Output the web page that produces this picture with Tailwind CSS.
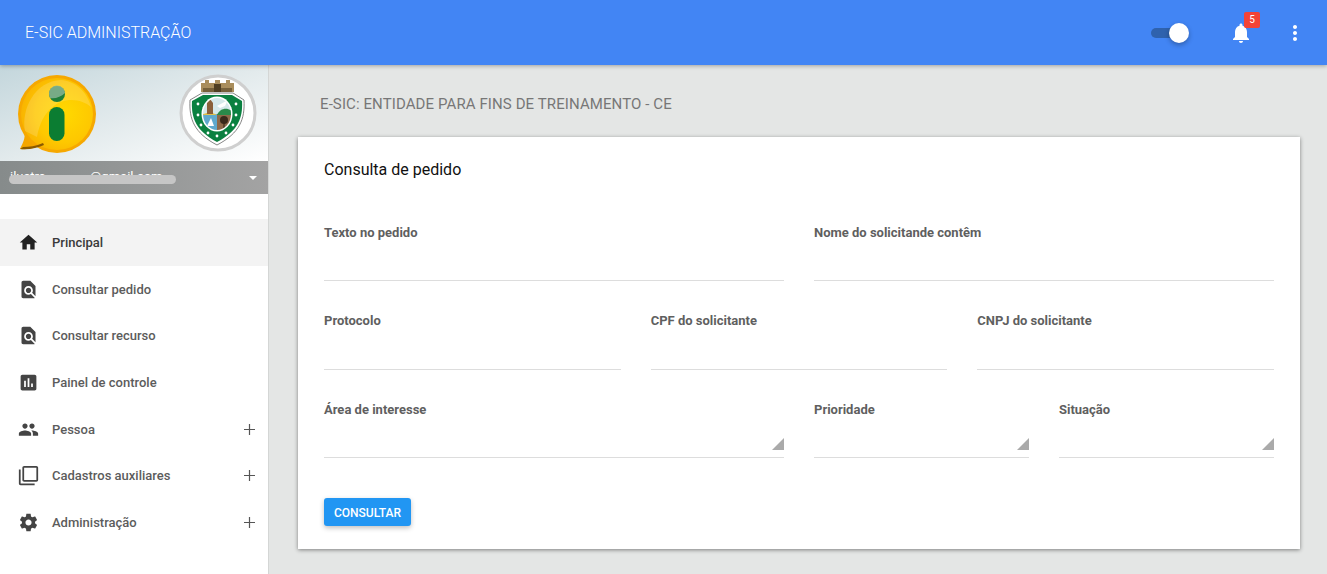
<!DOCTYPE html>
<html lang="pt-BR">
<head>
<meta charset="UTF-8">
<title>E-SIC Administração</title>
<script src="https://cdn.jsdelivr.net/npm/@tailwindcss/browser@4"></script>
</head>
<body class="h-[574px] overflow-hidden bg-[#e4e6e5] font-['Roboto',sans-serif] text-[#5f5f5f]">

<!-- topo -->
<header class="relative z-10 flex h-[65px] items-center justify-between bg-[#4285f4] pl-[25px] pr-[20px] shadow-[0_1px_4px_rgba(0,0,0,0.3)]">
  <div class="text-[16px] font-light text-white">E-SIC ADMINISTRAÇÃO</div>
  <div class="flex items-center">
    <div class="relative mr-[48px] h-[10px] w-[30px] rounded-full bg-[#2f62ad]">
      <div class="absolute right-[-8px] top-[-5px] h-[20px] w-[20px] rounded-full bg-white shadow-[0_2px_5px_rgba(0,0,0,0.3)]"></div>
    </div>
    <div class="relative mr-[30px]">
      <svg class="block h-[24px] w-[24px] fill-white" viewBox="0 0 24 24"><path d="M12 22c1.1 0 2-.9 2-2h-4c0 1.1.89 2 2 2zm6-6v-5c0-3.07-1.64-5.64-4.5-6.32V4c0-.83-.67-1.5-1.5-1.5s-1.5.67-1.5 1.5v.68C7.63 5.36 6 7.92 6 11v5l-2 2v1h16v-1l-2-2z"/></svg>
      <span class="absolute left-[15px] top-[-9px] flex h-[16px] w-[16px] items-center justify-center rounded-[2px] bg-[#f44336] text-[10px] text-white">5</span>
    </div>
    <svg class="block h-[24px] w-[24px] fill-white" viewBox="0 0 24 24"><path d="M12 8c1.1 0 2-.9 2-2s-.9-2-2-2-2 .9-2 2 .9 2 2 2zm0 2c-1.1 0-2 .9-2 2s.9 2 2 2 2-.9 2-2-.9-2-2-2zm0 6c-1.1 0-2 .9-2 2s.9 2 2 2 2-.9 2-2-.9-2-2-2z"/></svg>
  </div>
</header>

<div class="flex h-[509px]">
  <!-- menu lateral -->
  <aside class="w-[269px] shrink-0 border-r border-[#d4d6d5] bg-white">
    <div class="flex h-[96px] items-center justify-between bg-gradient-to-br from-[#c3d6dc] via-[#e2eaec] to-white pl-[15px] pr-[10px]">
      <svg class="block" width="85" height="84" viewBox="0 0 85 84">
        <defs>
          <radialGradient id="sol" cx="0.6" cy="0.5" r="0.6">
            <stop offset="0" stop-color="#ffd900"/><stop offset="0.65" stop-color="#fec800"/><stop offset="1" stop-color="#f9b400"/>
          </radialGradient>
        </defs>
        <path d="M10 60 C10 68 8 72 5 78 C14 79 22 77 29 72Z" fill="#f4a600"/>
        <circle cx="42" cy="43" r="39" fill="#f6a800"/>
        <circle cx="42" cy="43" r="36" fill="url(#sol)"/>
        <path d="M5 78 C14 79 22 77 29 74 L28 72 C21 75 14 76 8 76Z" fill="#8a5a00"/>
        <path d="M10 60 C6 38 20 10 46 9 C60 10 72 20 76 36 C62 24 30 24 22 66Z" fill="#fff" opacity="0.16"/>
        <circle cx="42" cy="23" r="8" fill="#1f7f3a"/>
        <path d="M34 23 A8 8 0 0 1 50 22 C46 26 40 28 35 27Z" fill="#8fb79a" opacity="0.8"/>
        <rect x="34" y="36" width="15.5" height="34" rx="7.75" fill="#0b7d32"/>
      </svg>
      <svg class="block" width="80" height="80" viewBox="0 0 80 80">
        <defs><clipPath id="oval"><ellipse cx="39" cy="41" rx="14" ry="16"/></clipPath></defs>
        <circle cx="40" cy="40" r="37" fill="#fff" stroke="#cfcfcf" stroke-width="3"/>
        <path d="M23 19 V10 H27 V7 H31 V10 H37 V7 H42 V10 H48 V7 H52 V10 H56 V19Z" fill="#a98d5c"/>
        <rect x="25" y="15" width="29" height="4" fill="#76603a"/>
        <rect x="36" y="11" width="7" height="8" fill="#4f3e22"/>
        <path d="M12 27 L24 20 H55 L66 27 C67 46 62 60 39 72 C16 60 11 46 12 27Z" fill="#fff" stroke="#666" stroke-width="0.8"/>
        <path d="M14 28 L25 22 H54 L64 28 C65 45 60 58 39 69 C18 58 13 45 14 28Z" fill="#0a8040"/>
        <ellipse cx="39" cy="41" rx="15.5" ry="17.5" fill="#fff"/>
        <g clip-path="url(#oval)">
          <rect x="24" y="24" width="30" height="18" fill="#d5e8ea"/>
          <rect x="24" y="41" width="15" height="17" fill="#5fa9cd"/>
          <rect x="39" y="41" width="15" height="17" fill="#8d6a4a"/>
          <path d="M39 42 C42 35 49 34 54 38 V42Z" fill="#2a8a4a"/>
          <path d="M24 42 C28 39 34 39 39 42Z" fill="#e0c04a"/>
          <path d="M29 41 V30 L32 26 L35 30 V41Z" fill="#8a5f3a"/>
          <path d="M39 33 L50 27 L47 33 L42 35Z" fill="#fff"/>
          <path d="M29 53 L33 45 L36 53Z" fill="#fff"/>
          <circle cx="46" cy="47" r="4" fill="#3a2a1c"/>
          <rect x="45.4" y="48" width="1.2" height="8" fill="#3a2a1c"/>
        </g>
        <g fill="#fff">
          <circle cx="20" cy="31" r="1.4"/><circle cx="20" cy="42" r="1.4"/><circle cx="23" cy="52" r="1.4"/>
          <circle cx="30" cy="60" r="1.4"/><circle cx="39" cy="63" r="1.4"/><circle cx="48" cy="60" r="1.4"/>
          <circle cx="55" cy="52" r="1.4"/><circle cx="58" cy="42" r="1.4"/><circle cx="58" cy="31" r="1.4"/>
        </g>
      </svg>
    </div>
    <div class="relative flex h-[33px] items-center justify-between bg-gradient-to-r from-[#868b8b] to-[#a3a3a3] pl-[10px] pr-[11px] text-[13px] text-white">
      <span class="-translate-y-px">ilustra<span class="ml-[44px]">@gmail.com</span></span>
      <span class="absolute left-[9px] top-[14px] h-[9px] w-[167px] rounded-full bg-[#c6c6c6]"></span>
      <span class="h-0 w-0 border-x-[4px] border-t-[4px] border-x-transparent border-t-white"></span>
    </div>
    <nav class="mt-[25px] text-[13px] font-medium text-[#5c5c5c]">
      <a class="flex h-[47px] items-center bg-[#f3f3f3] pl-[18px] pr-[13px] text-[#3a3a3a]">
        <svg class="mr-[13px] h-[21px] w-[21px] fill-[#222]" viewBox="0 0 24 24"><path d="M10 20v-6h4v6h5v-8h3L12 3 2 12h3v8z"/></svg>Principal
      </a>
      <a class="flex h-[46.67px] items-center pl-[18px] pr-[13px]">
        <svg class="mr-[13px] h-[21px] w-[21px] fill-[#444]" viewBox="0 0 24 24"><path d="M20 19.59V8l-6-6H6c-1.1 0-1.99.9-1.99 2L4 20c0 1.1.89 2 1.99 2H18c.45 0 .85-.15 1.19-.4l-4.43-4.43c-.8.52-1.74.83-2.76.83-2.76 0-5-2.24-5-5s2.24-5 5-5 5 2.24 5 5c0 1.02-.31 1.96-.83 2.75L20 19.59zM9 13c0 1.66 1.34 3 3 3s3-1.34 3-3-1.34-3-3-3-3 1.34-3 3z"/></svg>Consultar pedido
      </a>
      <a class="flex h-[46.67px] items-center pl-[18px] pr-[13px]">
        <svg class="mr-[13px] h-[21px] w-[21px] fill-[#444]" viewBox="0 0 24 24"><path d="M20 19.59V8l-6-6H6c-1.1 0-1.99.9-1.99 2L4 20c0 1.1.89 2 1.99 2H18c.45 0 .85-.15 1.19-.4l-4.43-4.43c-.8.52-1.74.83-2.76.83-2.76 0-5-2.24-5-5s2.24-5 5-5 5 2.24 5 5c0 1.02-.31 1.96-.83 2.75L20 19.59zM9 13c0 1.66 1.34 3 3 3s3-1.34 3-3-1.34-3-3-3-3 1.34-3 3z"/></svg>Consultar recurso
      </a>
      <a class="flex h-[46.67px] items-center pl-[18px] pr-[13px]">
        <svg class="mr-[13px] h-[21px] w-[21px] fill-[#444]" viewBox="0 0 24 24"><path d="M19 3H5c-1.1 0-2 .9-2 2v14c0 1.1.9 2 2 2h14c1.1 0 2-.9 2-2V5c0-1.1-.9-2-2-2zM9 17H7v-7h2v7zm4 0h-2V7h2v10zm4 0h-2v-4h2v4z"/></svg>Painel de controle
      </a>
      <a class="flex h-[46.67px] items-center pl-[18px] pr-[13px]">
        <svg class="mr-[13px] h-[21px] w-[21px] fill-[#444]" viewBox="0 0 24 24"><path d="M16 11c1.66 0 2.99-1.34 2.99-3S17.66 5 16 5c-1.66 0-3 1.34-3 3s1.34 3 3 3zm-8 0c1.66 0 2.99-1.34 2.99-3S9.66 5 8 5C6.34 5 5 6.34 5 8s1.34 3 3 3zm0 2c-2.33 0-7 1.17-7 3.5V19h14v-2.5c0-2.33-4.67-3.5-7-3.5zm8 0c-.29 0-.62.02-.97.05 1.16.84 1.97 1.97 1.97 3.45V19h6v-2.5c0-2.33-4.67-3.5-7-3.5z"/></svg>Pessoa
        <svg class="ml-auto h-[11px] w-[11px] stroke-[#555]" viewBox="0 0 11 11"><path d="M5.5 0v11M0 5.5h11" stroke-width="1.2"/></svg>
      </a>
      <a class="flex h-[46.67px] items-center pl-[18px] pr-[13px]">
        <svg class="mr-[13px] h-[21px] w-[21px] fill-[#444]" viewBox="0 0 24 24"><path d="M3 5H1v16c0 1.1.9 2 2 2h16v-2H3V5zm18-4H7c-1.1 0-2 .9-2 2v14c0 1.1.9 2 2 2h14c1.1 0 2-.9 2-2V3c0-1.1-.9-2-2-2zm0 16H7V3h14v14z"/></svg>Cadastros auxiliares
        <svg class="ml-auto h-[11px] w-[11px] stroke-[#555]" viewBox="0 0 11 11"><path d="M5.5 0v11M0 5.5h11" stroke-width="1.2"/></svg>
      </a>
      <a class="flex h-[46.67px] items-center pl-[18px] pr-[13px]">
        <svg class="mr-[13px] h-[21px] w-[21px] fill-[#444]" viewBox="0 0 24 24"><path d="M19.43 12.98c.04-.32.07-.64.07-.98s-.03-.66-.07-.98l2.11-1.65c.19-.15.24-.42.12-.64l-2-3.46c-.12-.22-.39-.3-.61-.22l-2.49 1c-.52-.4-1.08-.73-1.69-.98l-.38-2.65C14.46 2.18 14.25 2 14 2h-4c-.25 0-.46.18-.49.42l-.38 2.65c-.61.25-1.17.59-1.69.98l-2.49-1c-.23-.09-.49 0-.61.22l-2 3.46c-.13.22-.07.49.12.64l2.11 1.65c-.04.32-.07.65-.07.98s.03.66.07.98l-2.11 1.65c-.19.15-.24.42-.12.64l2 3.46c.12.22.39.3.61.22l2.49-1c.52.4 1.08.73 1.69.98l.38 2.65c.03.24.24.42.49.42h4c.25 0 .46-.18.49-.42l.38-2.65c.61-.25 1.17-.59 1.69-.98l2.49 1c.23.09.49 0 .61-.22l2-3.46c.12-.22.07-.49-.12-.64l-2.11-1.65zM12 15.5c-1.93 0-3.5-1.57-3.5-3.5s1.57-3.5 3.5-3.5 3.5 1.57 3.5 3.5-1.57 3.5-3.5 3.5z"/></svg>Administração
        <svg class="ml-auto h-[11px] w-[11px] stroke-[#555]" viewBox="0 0 11 11"><path d="M5.5 0v11M0 5.5h11" stroke-width="1.2"/></svg>
      </a>
    </nav>
  </aside>

  <!-- conteudo -->
  <main class="flex-1 pl-[29px] pr-[27px] pt-[29px]">
    <h2 class="mb-[23px] pl-[22px] text-[15px] leading-[20px] tracking-[0.1px] text-[#777]">E-SIC: ENTIDADE PARA FINS DE TREINAMENTO - CE</h2>
    <section class="h-[412px] bg-white px-[26px] pt-[23px] shadow-[0_1px_4px_rgba(0,0,0,0.45)]">
      <h3 class="mb-[45px] text-[16px] leading-[20px] text-[#111]">Consulta de pedido</h3>

      <div class="grid grid-cols-2 gap-x-[30px]">
        <label class="block h-[56px] border-b border-[#ddd] text-[13px] font-bold leading-[16px]">Texto no pedido</label>
        <label class="block h-[56px] border-b border-[#ddd] text-[13px] font-bold leading-[16px]">Nome do solicitande contêm</label>
      </div>
      <div class="mt-[31.5px] grid grid-cols-3 gap-x-[30px]">
        <label class="block h-[57.5px] border-b border-[#ddd] text-[13px] font-bold leading-[16px]">Protocolo</label>
        <label class="block h-[57.5px] border-b border-[#ddd] text-[13px] font-bold leading-[16px]">CPF do solicitante</label>
        <label class="block h-[57.5px] border-b border-[#ddd] text-[13px] font-bold leading-[16px]">CNPJ do solicitante</label>
      </div>
      <div class="mt-[31.5px] grid grid-cols-[460px_215px_215px] gap-x-[30px]">
        <label class="relative block h-[56.5px] border-b border-[#ddd] text-[13px] font-bold leading-[16px]">Área de interesse
          <span class="absolute bottom-[7px] right-0 h-[12px] w-[12px] bg-[#aaa] [clip-path:polygon(100%_0,100%_100%,0_100%)]"></span>
        </label>
        <label class="relative block h-[56.5px] border-b border-[#ddd] text-[13px] font-bold leading-[16px]">Prioridade
          <span class="absolute bottom-[7px] right-0 h-[12px] w-[12px] bg-[#aaa] [clip-path:polygon(100%_0,100%_100%,0_100%)]"></span>
        </label>
        <label class="relative block h-[56.5px] border-b border-[#ddd] text-[13px] font-bold leading-[16px]">Situação
          <span class="absolute bottom-[7px] right-0 h-[12px] w-[12px] bg-[#aaa] [clip-path:polygon(100%_0,100%_100%,0_100%)]"></span>
        </label>
      </div>

      <button class="mt-[40px] h-[28px] w-[87px] rounded-[3px] bg-[#2196f3] pt-px text-[12px] font-medium text-white shadow-[0_2px_5px_rgba(0,0,0,0.25)]">CONSULTAR</button>
    </section>
  </main>
</div>
</body>
</html>
